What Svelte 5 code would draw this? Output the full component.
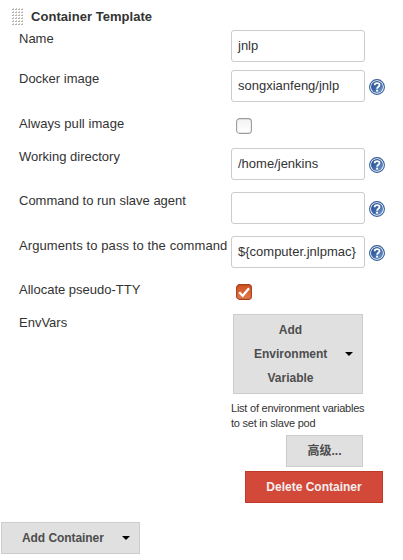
<script>
  const dots = [];
  for (let y = 0; y < 6; y++) for (let x = 0; x < 4; x++) dots.push([x * 3, y * 3]);
  const rows = [
    { label: 'Name', h: 40, type: 'text', value: 'jnlp' },
    { label: 'Docker image', h: 45, type: 'text', value: 'songxianfeng/jnlp', help: true },
    { label: 'Always pull image', h: 33, type: 'check', checked: false, spacing: 0.07 },
    { label: 'Working directory', h: 44, type: 'text', value: '/home/jenkins', help: true },
    { label: 'Command to run slave agent', h: 44, type: 'text', value: '', help: true },
    { label: 'Arguments to pass to the command', h: 45, type: 'text', value: '${computer.jnlpmac}', help: true, spacing: 0.1, drop: 1 },
    { label: 'Allocate pseudo-TTY', h: 33, type: 'check', checked: true }
  ];
</script>

<main>
  <header>
    <svg class="grip" width="12" height="18" viewBox="0 0 12 18" shape-rendering="crispEdges">
      {#each dots as [x, y]}
        <path d="M{x} {y + 1}h2v1h-2z" fill="#b5b2ac" /><path d="M{x + 1} {y}h1v1h-1z" fill="#d0cdca" />
      {/each}
    </svg>
    <b>Container Template</b>
  </header>
  {#each rows as row}
    <div class="row" style="height: {row.h}px">
      <span class="label" style="letter-spacing: {row.spacing ?? 0}px; padding-top: {row.drop ?? 0}px">{row.label}</span>
      {#if row.type === 'text'}
        <div class="input">{row.value}</div>
        {#if row.help}
          <svg class="help" width="16" height="16" viewBox="0 0 16 16">
            <defs><linearGradient id="hg" x1="0" y1="0" x2="1" y2="1"><stop offset="0" stop-color="#244b86" /><stop offset=".5" stop-color="#3d69a8" /><stop offset="1" stop-color="#7ba3d4" /></linearGradient></defs>
            <circle cx="8" cy="8" r="7.4" fill="#fff" stroke="#315c9a" stroke-width="1.1" />
            <circle cx="8" cy="8" r="6" fill="url(#hg)" />
            <path d="M5.6 6.3C5.6 3.4 10.5 3.3 10.5 6C10.5 7.7 8.1 7.7 8.1 9.7" fill="none" stroke="#fff" stroke-width="1.8" />
            <rect x="7.1" y="10.7" width="2" height="1.9" fill="#fff" />
          </svg>
        {/if}
      {:else}
        <svg class="check" width="16" height="16" viewBox="0 0 16 16">
          <defs>
            <linearGradient id="on" x2="0" y2="1"><stop stop-color="#d0501f" /><stop offset="1" stop-color="#e27950" /></linearGradient>
            <linearGradient id="off" x2="0" y2="1"><stop stop-color="#f3f3f3" /><stop offset="1" stop-color="#fff" /></linearGradient>
          </defs>
          <rect x=".6" y=".6" width="14.8" height="14.8" rx="3.2" fill={row.checked ? 'url(#on)' : 'url(#off)'} stroke={row.checked ? '#a5401c' : '#9b9b9b'} stroke-width="1.1" />
          {#if row.checked}<path d="M3.2 8.2l3.5 3.5L13 4.3" fill="none" stroke="#fff" stroke-width="2.3" />{/if}
        </svg>
      {/if}
    </div>
  {/each}
  <div class="row env">
    <span class="label">EnvVars</span>
    <div class="cell">
      <button class="menu tall"><span>Add<br />Environment<br />Variable</span><i></i></button>
      <p>List of environment variables<br />to set in slave pod</p>
    </div>
  </div>
  <button class="advanced">高级...</button>
  <button class="delete">Delete Container</button>
  <button class="menu add"><span>Add Container</span><i></i></button>
</main>

<style>
  :global(body) { background: #fff; }
  main { width: 403px; height: 560px; overflow: hidden; display: flex; flex-direction: column; font: 13px/18px "Liberation Sans", Arial, "Noto Sans CJK SC", sans-serif; color: #333; }
  header { height: 22px; padding: 8px 0 0 12px; display: flex; flex: none; }
  header b { margin-left: 7px; letter-spacing: 0.04px; }
  .row { display: flex; align-items: flex-start; padding-left: 19px; flex: none; }
  .label { width: 212px; flex: none; white-space: nowrap; }
  .input { box-sizing: border-box; width: 134px; height: 32px; border: 1px solid #ccc; border-radius: 3px; padding: 0 6px; line-height: 30px; white-space: nowrap; flex: none; }
  .help { margin: 9px 0 0 4px; }
  .check { margin: 3px 0 0 5px; }
  .env { height: 121px; }
  .cell { padding-left: 2px; }
  button { box-sizing: border-box; height: 32px; border: 1px solid #ccc; border-radius: 0; background: #e0e0e0; color: #4d4d4d; font: bold 12px/24px "Liberation Sans", Arial, "Noto Sans CJK SC", sans-serif; margin: 0; padding: 0; flex: none; }
  .menu { display: flex; align-items: center; justify-content: space-between; }
  .menu i { width: 0; height: 0; border: 4px solid transparent; border-top-color: #000; border-bottom: 0; margin-right: 9px; }
  .tall { width: 130px; height: 80px; }
  .tall span { margin-left: 20px; width: 73px; text-align: center; }
  p { margin: 7px 0 0 -2px; font-size: 11px; line-height: 15px; letter-spacing: -0.23px; white-space: nowrap; }
  .advanced { width: 77px; margin-left: 286px; }
  .delete { width: 138px; margin: 4px 0 0 245px; background: #d24939; border-color: #c03a2b; color: #f5eeee; }
  .add { width: 139px; margin: 19px 0 0 1px; }
  .add span { margin-left: 20px; letter-spacing: -0.07px; }
</style>
